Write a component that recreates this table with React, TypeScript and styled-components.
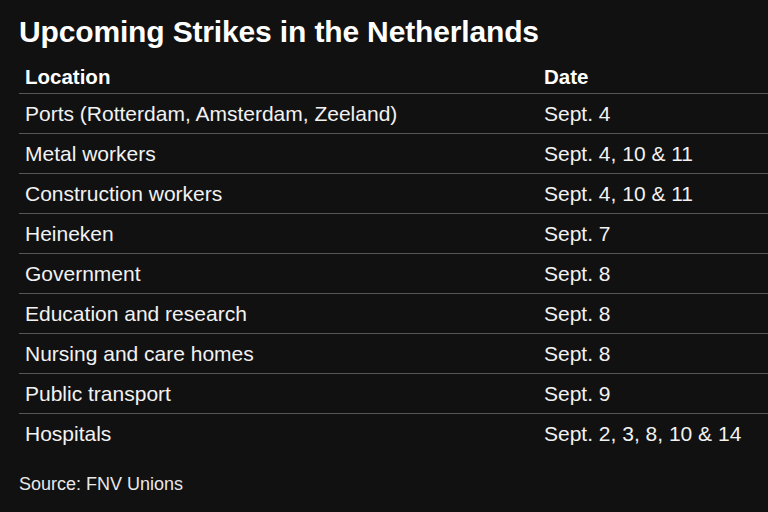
import styled, { createGlobalStyle } from "styled-components";

const rows: [string, string][] = [
  ["Ports (Rotterdam, Amsterdam, Zeeland)", "Sept. 4"],
  ["Metal workers", "Sept. 4, 10 & 11"],
  ["Construction workers", "Sept. 4, 10 & 11"],
  ["Heineken", "Sept. 7"],
  ["Government", "Sept. 8"],
  ["Education and research", "Sept. 8"],
  ["Nursing and care homes", "Sept. 8"],
  ["Public transport", "Sept. 9"],
  ["Hospitals", "Sept. 2, 3, 8, 10 & 14"],
];

const GlobalStyle = createGlobalStyle`
  html, body {
    margin: 0;
    background: #111111;
  }
  body {
    font-family: "Liberation Sans", Arial, sans-serif;
    color: #f2f2f2;
  }
`;

const App = () => {
  return (
    <>
      <GlobalStyle />
      <Chart>
        <Title>Upcoming Strikes in the Netherlands</Title>
        <Table>
          <thead>
            <tr>
              <HeadCell>Location</HeadCell>
              <HeadCell>Date</HeadCell>
            </tr>
          </thead>
          <tbody>
            {rows.map(([place, date]) => (
              <Row key={place}>
                <Cell>{place}</Cell>
                <Cell>{date}</Cell>
              </Row>
            ))}
          </tbody>
        </Table>
        <Source>Source: FNV Unions</Source>
      </Chart>
    </>
  );
};

const Chart = styled.section`
  width: 768px;
  height: 512px;
  box-sizing: border-box;
  padding: 14px 0 0 19px;
  overflow: hidden;
`;

const Title = styled.h1`
  margin: 0 0 10px;
  font-size: 30px;
  font-weight: 700;
  line-height: 36px;
  letter-spacing: -0.15px;
  color: #ffffff;
`;

const Table = styled.table`
  width: 749px;
  border-collapse: collapse;
  table-layout: fixed;
`;

const HeadCell = styled.th`
  text-align: left;
  font-size: 20.5px;
  font-weight: 700;
  height: 33px;
  padding: 0 0 0 6px;
  vertical-align: middle;
  color: #ffffff;
  border-bottom: 1px solid #555555;
  &:first-child {
    width: 513px;
  }
`;

const Row = styled.tr`
  & + & td {
    border-top: 1px solid #555555;
  }
`;

const Cell = styled.td`
  font-size: 21px;
  height: 39px;
  padding: 0 0 0 6px;
  vertical-align: middle;
  color: #f2f2f2;
  white-space: nowrap;
`;

const Source = styled.p`
  margin: 21px 0 0;
  font-size: 18px;
  color: #e8e8e8;
`;

export default App;
